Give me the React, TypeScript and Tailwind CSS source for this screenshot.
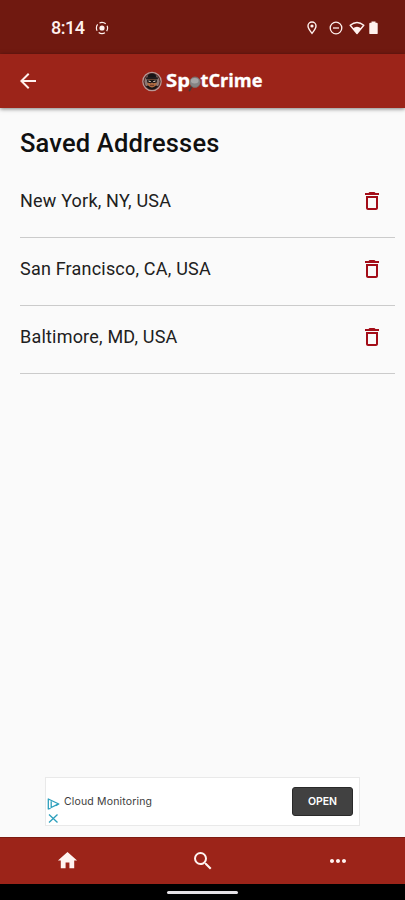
import React from 'react'
import { MdArrowBack, MdDeleteOutline, MdHome, MdMoreHoriz, MdSearch } from 'react-icons/md'

const addresses = ['New York, NY, USA', 'San Francisco, CA, USA', 'Baltimore, MD, USA']

const StatusBar = () => (
  <div className="h-[54px] bg-[#701910] flex items-center text-[#fff1ee] pl-[51px] pr-[27px]">
    <span className="w-[44px] pt-px whitespace-nowrap font-['Roboto',sans-serif] font-medium text-[18px] tracking-[-0.500px] leading-none">8:14</span>
    <svg className="w-[14px] h-[14px] mt-px" viewBox="0 0 14 14" fill="none" stroke="currentColor">
      <circle cx="7" cy="7" r="5.6" strokeWidth="1.2" strokeDasharray="6.600 2.196" strokeDashoffset="3.300" />
      <circle cx="7" cy="7" r="2.6" fill="currentColor" stroke="none" />
    </svg>

    <div className="ml-auto mt-px flex items-center">
      <svg className="w-[10px] h-[14px]" viewBox="0 0 10 14" fill="none" stroke="currentColor">
        <path d="M5 12.4C3 9.900 1 7.400 1 5a4 4 0 0 1 8 0c0 2.400-2 4.900-4 7.400z" strokeWidth="1.400" />
        <circle cx="5" cy="5" r="1.600" fill="currentColor" stroke="none" />
      </svg>
      <svg className="w-[14px] h-[14px] ml-[12px]" viewBox="0 0 14 14" fill="none" stroke="currentColor" strokeWidth="1.300">
        <circle cx="7" cy="7" r="5.800" />
        <path d="M4 7h6" />
      </svg>
      <svg className="w-[16px] h-[14px] ml-[6px]" viewBox="0 0 16 14" fill="none">
        <path d="M1.200 4.200Q8-1.200 14.800 4.200L8 12.500z" stroke="currentColor" strokeWidth="1.400" strokeLinejoin="round" />
        <path d="M3.800 7.500Q8 4.200 12.200 7.500L8 12.800z" fill="currentColor" />
      </svg>
      <svg className="w-[9px] h-[14px] ml-[4px]" viewBox="0 0 9 14" fill="currentColor">
        <path d="M2.500 0.500h4v1.300h1.300q.9 0 .9.900v9.500q0 .9-.9.900H1.200q-.9 0-.9-.9V2.700q0-.9.900-.9h1.300z" />
      </svg>
    </div>
  </div>
)

const Logo = () => (
  <svg className="w-[123px] h-[24px]" viewBox="0 0 123 24">
    {/* Burglar badge */}
    <circle cx="11" cy="12.500" r="9.200" fill="#6b4540" stroke="#b99a97" strokeWidth="1.200" />
    <circle cx="11" cy="12.500" r="7.900" fill="#8b7773" stroke="#4b1b18" strokeWidth="0.700" />
    <path d="M4.800 17.500Q7 15.500 11 16q4 -.5 6.200 1.500Q14.500 20.500 11 20.500T4.800 17.500z" fill="#191516" />
    <ellipse cx="11" cy="13.500" rx="4.700" ry="4.900" fill="#b06c42" />
    <path d="M6.300 8.800Q6.800 4.600 11 4.600t4.700 4.200z" fill="#161416" />
    <path d="M4.300 8.600Q11 7.200 17.700 8.600L16.300 10.400H5.700z" fill="#211a1b" />
    <path d="M6.200 10.900h9.600v2.700l-3.500.7-1.300-.7-1.300.7-3.500-.7z" fill="#161416" />
    <path d="M7.500 12l2.200.6M14.500 12l-2.200.6" stroke="#f5dfcd" strokeWidth="1" />
    <path d="M9 16.300h4" stroke="#4d251e" strokeWidth="0.800" />

    <g className="font-['Open_Sans',sans-serif] font-bold text-[17.500px]" fill="#fff">
      <text x="25" y="18.200" textLength="24" lengthAdjust="spacingAndGlyphs" stroke="#fff" strokeWidth="0.300">Sp</text>
      <text x="59.500" y="18.200" textLength="62" lengthAdjust="spacingAndGlyphs" stroke="#fff" strokeWidth="0.300">tCrime</text>
    </g>
    {/* Magnifying glass standing in for the o */}
    <path d="M50.600 17.800l-2.100 3.700" stroke="#4a3936" strokeWidth="1.800" strokeLinecap="round" />
    <circle cx="54" cy="13.200" r="5.200" fill="#858585" stroke="#777371" strokeWidth="0.800" />
    <ellipse cx="53.700" cy="11.700" rx="3.800" ry="2.700" fill="#a6a6a6" />
  </svg>
)

const AppBar = () => (
  <header className="relative h-[54px] bg-[#9c2419] flex items-center justify-center shadow-[0_1px_4px_rgba(0,0,0,0.5)]">
    <button className="absolute left-[15.500px] text-[#fff1ee]" aria-label="Back">
      <MdArrowBack className="w-6 h-6" />
    </button>
    <Logo />
  </header>
)

const AdBanner = () => (
  <div className="w-[315px] h-[49px] mx-auto mb-[11px] bg-white border border-[#e9e9e9] flex items-center pr-[6px]">
    <div className="w-[18px] pl-[1px] pt-[18px] flex flex-col gap-[3px]">
      <svg className="w-[13px] h-[12px]" viewBox="0 0 13 12" fill="none" stroke="#2d9fbc" strokeWidth="1.300" strokeLinejoin="round">
        <path d="M3.600 10.300L1.300 11V1l10.500 5-3.200 1.700" />
        <path d="M4.200 3.300v6.200l6.800-3.400" />
      </svg>
      <svg className="w-[13px] h-[11px]" viewBox="0 0 13 11" stroke="#2d9fbc" strokeWidth="1.300">
        <path d="M2 1.500l8.500 8M10.500 1.500l-8.500 8" />
      </svg>
    </div>
    <span className="whitespace-nowrap font-['Inter',sans-serif] text-[10.500px] tracking-[0.160px] text-[#3d3d3d]">Cloud Monitoring</span>
    <button className="ml-auto w-[61px] h-[29px] rounded-[3px] bg-[#414141] border border-[#292929] text-white font-['Inter',sans-serif] font-semibold text-[10.500px]">
      OPEN
    </button>
  </div>
)

const App = () => {
  return (
    <div className="w-full h-[900px] flex flex-col overflow-hidden bg-[#fafafa] font-['Roboto',sans-serif]">
      <StatusBar />
      <AppBar />

      <main className="flex-1 pl-5 pr-[10px] pt-[17px]">
        <h1 className="text-[25.500px] leading-9 font-medium text-[#101010] tracking-[0.170px]">Saved Addresses</h1>
        <ul className="mt-[9px]">
          {addresses.map((address) => (
            <li key={address} className="h-[68px] pb-[6px] border-b border-[#cbcbcb] flex items-center justify-between pr-[11px]">
              <span className="text-[18px] text-[#202020] tracking-[0.200px]">{address}</span>
              <button className="text-[#a30d18]" aria-label={`Delete ${address}`}>
                <MdDeleteOutline className="w-6 h-6" />
              </button>
            </li>
          ))}
        </ul>
      </main>

      <AdBanner />

      <nav className="h-[47px] bg-[#9c2419] border-t border-[#7d1b12] grid grid-cols-3 items-center justify-items-center pb-px text-[#fff4f1]">
        <MdHome className="w-[23px] h-[23px]" />
        <MdSearch className="w-6 h-6" />
        <MdMoreHoriz className="w-6 h-6" />
      </nav>
      <div className="h-4 bg-black flex justify-center pt-[7px]">
        <div className="w-[71px] h-[3px] rounded-full bg-[#e4e1e5]"></div>
      </div>
    </div>
  )
}

export default App
